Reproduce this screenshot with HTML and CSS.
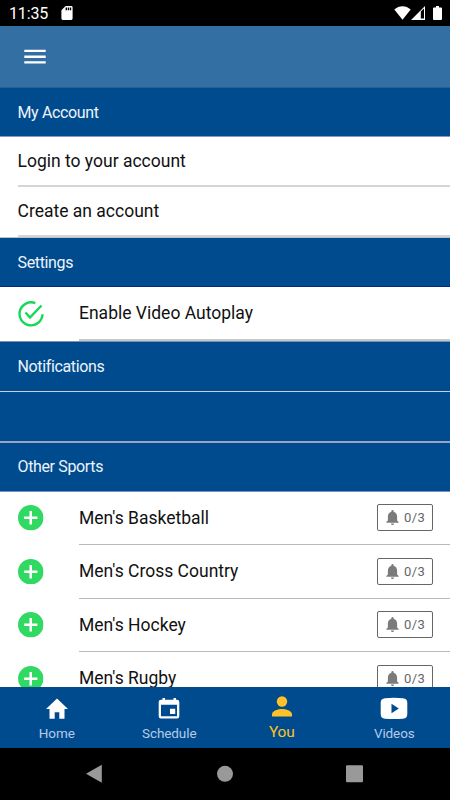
FILE: index.html
```html
<!DOCTYPE html>
<html lang="en">
<head>
<meta charset="utf-8">
<title>You</title>
<link rel="stylesheet" href="styles.css">
</head>
<body>
<svg width="0" height="0" class="defs">
  <symbol id="add" viewBox="2 2 20 20"><path d="M12 2a10 10 0 1 0 0 20 10 10 0 0 0 0-20zm5.200 11H13v4.200h-2V13H6.800v-2H11V6.800h2V11h4.200z"/></symbol>
  <symbol id="bell" viewBox="4 2.500 16 19.500"><path d="M12 22a2 2 0 0 0 2-2h-4a2 2 0 0 0 2 2zm6-6v-5c0-3.070-1.640-5.640-4.500-6.320V4a1.500 1.500 0 0 0-3 0v.680C7.630 5.360 6 7.920 6 11v5l-2 2v1h16v-1z"/></symbol>
</svg>
<div class="status">
  <span class="clock">11:35</span>
  <svg class="sd" viewBox="4 2 16 20"><path d="M18 2h-8L4 8v12a2 2 0 0 0 2 2h12a2 2 0 0 0 2-2V4a2 2 0 0 0-2-2zm-6 6h-2V4h2zm3 0h-2V4h2zm3 0h-2V4h2z"/></svg>
  <svg class="wifi" viewBox="0 0 17 14"><path d="M0.300 3.600C5-.9 12-.9 16.700 3.600L8.500 13.700z"/></svg>
  <svg class="signal" viewBox="0 0 14 14"><path fill-rule="evenodd" d="M0 14 14 0v14zM9.800 5.600v7H13V2.400z"/></svg>
  <svg class="battery" viewBox="0 0 9 14"><path d="M3 0h3v1.500h2a1 1 0 0 1 1 1V13a1 1 0 0 1-1 1H1a1 1 0 0 1-1-1V2.500a1 1 0 0 1 1-1h2z"/></svg>
</div>
<header class="appbar"><svg class="menu" viewBox="0 0 22 16"><path d="M.3.800h21.400v2.300H.3zM.3 6.600h21.400v2.300H.3zM.3 12.200h21.400v2.300H.3z"/></svg></header>
<main class="content">
  <h2 class="section account">My Account</h2>
  <div class="link"><span>Login to your account</span></div>
  <div class="link last"><span>Create an account</span></div>
  <h2 class="section settings">Settings</h2>
  <div class="row autoplay">
    <svg class="check" viewBox="0 0 26 26"><path d="M17.300 2.200A11.500 11.500 0 1 0 24.500 13.300M7.500 11.500l4.500 5L23.500 4.500"/></svg>
    <span class="label">Enable Video Autoplay</span>
  </div>
  <h2 class="section notifications">Notifications</h2>
  <div class="blank"></div>
  <h2 class="section sports">Other Sports</h2>
  <div class="row"><svg class="add"><use href="#add"/></svg><div class="label">Men's Basketball<span class="alerts"><svg><use href="#bell"/></svg>0/3</span></div></div>
  <div class="row"><svg class="add"><use href="#add"/></svg><div class="label">Men's Cross Country<span class="alerts"><svg><use href="#bell"/></svg>0/3</span></div></div>
  <div class="row"><svg class="add"><use href="#add"/></svg><div class="label">Men's Hockey<span class="alerts"><svg><use href="#bell"/></svg>0/3</span></div></div>
  <div class="row"><svg class="add"><use href="#add"/></svg><div class="label">Men's Rugby<span class="alerts"><svg><use href="#bell"/></svg>0/3</span></div></div>
</main>
<nav class="tabs">
  <a><svg viewBox="0 0 26 26"><path d="M13 2.500 2 13h3.500v9.700h5.200v-6.500h4.600v6.500h5.200V13H24z"/></svg>Home</a>
  <a><svg viewBox="0 0 26 26"><path fill-rule="evenodd" d="M6.500 2H9v1.700h8.500V2H20v1.700h1A2.300 2.300 0 0 1 23.300 6v14.300a2.300 2.300 0 0 1-2.300 2.300H5a2.300 2.300 0 0 1-2.300-2.300V6A2.300 2.300 0 0 1 5 3.700h1.500zM5 8.700v11.500h16V8.700zm9 4h5.200V18H14z"/></svg>Schedule</a>
  <a class="active"><svg viewBox="0 0 26 26"><circle cx="13" cy="7.500" r="5.200"/><path d="M3 22.500v-2.300c0-3.500 6.500-5.200 10-5.200s10 1.700 10 5.200v2.300z"/></svg>You</a>
  <a><svg class="wide" viewBox="0 0 28 26"><path fill-rule="evenodd" d="M5 2.200q9-.8 18 0 4.300.3 4.300 4.500v11.500q0 4.200-4.300 4.500-9 .6-18 0Q.700 22.400.700 18.200V6.700Q.700 2.500 5 2.200zm6.500 5.500v9.600l7.300-4.800z"/></svg>Videos</a>
</nav>
<footer class="system">
  <svg viewBox="0 0 450 52"><path d="M86 25.800 101.800 16.800v18z"/><circle cx="225" cy="25.800" r="8"/><rect x="346" y="17.300" width="17" height="17" rx="1"/></svg>
</footer>
</body>
</html>
```
FILE: styles.css
```css
* { box-sizing: border-box; }
body {
  margin: 0;
  width: 450px;
  height: 800px;
  display: flex;
  flex-direction: column;
  overflow: hidden;
  background: #fff;
  color: #111;
  font-family: Roboto, sans-serif;
}
svg { display: block; fill: currentColor; flex: none; }
.defs { position: absolute; }
.status {
  height: 26px;
  flex: none;
  display: flex;
  align-items: center;
  padding: 0 8px 0 9px;
  background: #000;
  color: #fff;
}
.clock { font-size: 16px; letter-spacing: -.15px; line-height: 26px; padding-top: 2px; width: 52px; }
.sd { width: 12px; height: 14px; }
.wifi { width: 17px; height: 14px; margin-left: auto; }
.signal { width: 14px; height: 14px; }
.battery { width: 9px; height: 14px; margin-left: 8px; }
.appbar {
  height: 62px;
  flex: none;
  padding: 23px 24px;
  background: #346fa3;
  border-bottom: 1px solid #24619a;
  color: #fff;
}
.menu { width: 22px; height: 16px; }
.content { flex: 1; min-height: 0; overflow: hidden; }
.section {
  margin: 0;
  padding-left: 17.500px;
  height: 49px;
  line-height: 49px;
  background: #004b8d;
  color: #edf3fc;
  font-size: 16px;
  letter-spacing: -.36px;
  font-weight: 400;
}
.account { border-bottom: 1px solid #8997c2; }
.settings { height: 50px; border-top: 1px solid #bfc3c8; border-bottom: 1px solid #002c83; }
.notifications { height: 51px; border-top: 1px solid #7893b4; border-bottom: 1px solid #c4cee8; line-height: 49px; }
.blank { height: 49px; background: #004b8d; }
.sports { height: 51px; border-top: 2px solid #9ba3c6; border-bottom: 1px solid #7593c3; line-height: 48px; }
.link { height: 50px; padding-left: 17.500px; font-size: 17.500px; line-height: 48px; }
.link span { display: block; height: 50px; border-bottom: 2px solid #d4d5d8; }
.row { height: 53.600px; display: flex; padding-left: 18px; }
.add { width: 25.500px; height: 25.500px; margin: 13.500px 35.500px 0 0; color: #30d962; }
.label {
  flex: 1;
  display: flex;
  justify-content: space-between;
  padding-right: 17px;
  border-bottom: 1px solid #b5babd;
  font-size: 17.500px;
  line-height: 52px;
}
.check { width: 26px; height: 26px; margin: 14px 35px 0 0; fill: none; stroke: #12d957; stroke-width: 2.400; }
.autoplay { height: 53.700px; }
.autoplay .label { border-bottom: 2px solid #c4c8c9; line-height: 53px; }
.alerts {
  width: 56px;
  height: 27px;
  margin-top: 12.400px;
  padding-left: 8px;
  display: flex;
  align-items: center;
  gap: 4px;
  border: 1px solid #666;
  border-radius: 2px;
  color: #666;
  font-size: 13px;
  letter-spacing: .4px;
  line-height: 25px;
}
.alerts svg { width: 13px; height: 15px; margin-right: 1px; color: #7b7b7b; }
.tabs { height: 61px; flex: none; display: grid; grid-template-columns: repeat(4, 1fr); background: #004b8d; }
.tabs a {
  display: flex;
  flex-direction: column;
  align-items: center;
  padding-top: 9px;
  padding-left: 1px;
  font-size: 13.500px;
  letter-spacing: -.1px;
  line-height: 23px;
  color: #b4cae8;
}
.tabs svg { width: 26px; height: 26px; color: #fff; }
.tabs .wide { width: 28px; }
.tabs .active { padding-top: 7px; font-size: 15.500px; letter-spacing: -.3px; line-height: 25px; color: #fdc229; }
.tabs .active svg { color: #fdc229; }
.system { height: 52px; flex: none; background: #000; color: #999; }
.system svg { width: 450px; height: 52px; }
```
